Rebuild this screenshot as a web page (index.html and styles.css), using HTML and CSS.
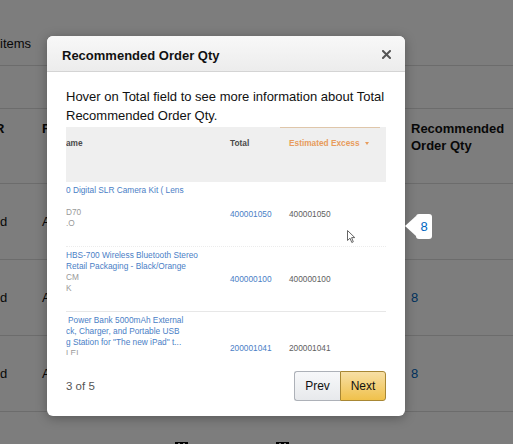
FILE: index.html
```html
<!DOCTYPE html>
<html lang="en">
<head>
<meta charset="utf-8">
<title>Recommended Order Qty</title>
<link rel="stylesheet" href="styles.css">
</head>
<body>
<div class="page">
  <div class="topbar"><span>items</span></div>
  <div class="band"></div>
  <div class="grid head">
    <div class="c1 cut">R</div>
    <div class="c2">Fulfillment</div>
    <div class="c3">Recommended<br>Order Qty</div>
  </div>
  <div class="grid row"><div class="c1">d</div><div class="c2">Amazon</div><div class="c3"></div></div>
  <div class="grid row"><div class="c1">d</div><div class="c2">Amazon</div><div class="c3 qty">8</div></div>
  <div class="grid row"><div class="c1">d</div><div class="c2">Amazon</div><div class="c3 qty">8</div></div>
  <div class="marks"><span class="mark"></span><span class="mark"></span></div>
</div>

<div class="overlay"></div>

<div class="modal">
  <div class="mhead">
    <span class="mtitle">Recommended Order Qty</span>
    <svg class="close" viewBox="0 0 9 9" width="9" height="9"><path d="M1 1L8 8M8 1L1 8" stroke="#555" stroke-width="2" stroke-linecap="square"/></svg>
  </div>
  <div class="mbody">
    <p class="intro">Hover on Total field to see more information about Total Recommended Order Qty.</p>
    <div class="shot">
      <div class="shead">
        <div class="sh">ame</div>
        <div class="sh">Total</div>
        <div class="sh excess-h">Estimated Excess<span class="caret"></span></div>
      </div>
      <div class="srow dotted">
        <div class="sname">
          <span class="link">0 Digital SLR Camera Kit ( Lens</span>
          <span class="gap"></span>
          <span class="meta">D70</span>
          <span class="meta">.O</span>
        </div>
        <div class="stotal">400001050</div>
        <div class="sexcess">400001050</div>
      </div>
      <div class="srow solid">
        <div class="sname">
          <span class="link">HBS-700 Wireless Bluetooth Stereo</span>
          <span class="link">Retail Packaging - Black/Orange</span>
          <span class="meta">CM</span>
          <span class="meta">K</span>
        </div>
        <div class="stotal">400000100</div>
        <div class="sexcess">400000100</div>
      </div>
      <div class="srow">
        <div class="sname tall">
          <span class="link ind">Power Bank 5000mAh External</span>
          <span class="link">ck, Charger, and Portable USB</span>
          <span class="link">g Station for "The new iPad" t...</span>
          <span class="meta">LEL</span>
        </div>
        <div class="stotal">200001041</div>
        <div class="sexcess">200001041</div>
      </div>
    </div>
    <div class="mfoot">
      <span class="count">3 of 5</span>
      <div class="btns">
        <button class="btn prev" type="button">Prev</button>
        <button class="btn next" type="button">Next</button>
      </div>
    </div>
  </div>
</div>

<div class="pop">8</div>

<svg class="cursor" viewBox="0 0 9 14" width="9" height="14"><path d="M0.5 0.5L0.5 10.5L3 8.2L4.8 12.5L6.3 11.8L4.6 7.6L7.8 7.6Z" fill="#fff" stroke="#666" stroke-width="1" stroke-linejoin="round"/></svg>
</body>
</html>
```

FILE: styles.css
```css
* { box-sizing: border-box; }
html, body { margin: 0; padding: 0; }
body {
  width: 513px;
  height: 444px;
  overflow: hidden;
  position: relative;
  background: #fff;
  color: #111;
  font-family: "Liberation Sans", Arial, sans-serif;
  font-size: 13px;
}

/* underlying page */
.page { width: 513px; }
.topbar {
  height: 66px;
  padding-top: 34px;
  line-height: 19px;
  border-bottom: 1px solid #dcdcdc;
}
.band { height: 43px; border-bottom: 1px solid #dcdcdc; }
.grid {
  display: grid;
  grid-template-columns: 42px 369px 1fr;
  border-bottom: 1px solid #dcdcdc;
  white-space: nowrap;
}
.head {
  height: 75px;
  padding-top: 11px;
  font-weight: bold;
  line-height: 17px;
}
.head .cut { margin-left: -5px; }
.row { height: 76px; align-items: center; line-height: 19px; }
.qty { color: #0066c0; }
.marks { display: flex; gap: 88px; padding: 30px 0 0 175px; }
.mark {
  width: 13px;
  height: 6px;
  border-top: 1px solid #000;
  background: repeating-linear-gradient(90deg, #000 0 3px, transparent 3px 5px);
}

.overlay {
  position: absolute;
  inset: 0;
  background: rgba(0, 0, 0, 0.51);
}

/* modal */
.modal {
  position: absolute;
  left: 47px;
  top: 36px;
  width: 358px;
  background: #fff;
  border-radius: 6px;
  overflow: hidden;
  box-shadow: 0 2px 12px rgba(0, 0, 0, 0.3);
}
.mhead {
  height: 36px;
  padding: 3px 14px 0 15px;
  display: flex;
  align-items: center;
  justify-content: space-between;
  background: linear-gradient(#f8f8f8, #ececec);
  border-bottom: 1px solid #d4d4d4;
}
.mtitle { font-weight: bold; font-size: 13px; color: #111; }
.close { display: block; margin-top: -2px; }
.mbody { padding: 15px 19px 15px; }
.intro { margin: 0 -6px 0 0; line-height: 19px; color: #111; }

.shot {
  margin-top: 2px;
  height: 228px;
  overflow: hidden;
  font-size: 8.3px;
  line-height: 11px;
  color: #666;
  white-space: nowrap;
}
.shead {
  height: 55px;
  background: #efefef;
  display: grid;
  grid-template-columns: 164px 50px 1fr;
}
.sh { padding-top: 11px; font-weight: bold; color: #4a4a4a; }
.excess-h {
  padding-top: 10px;
  padding-left: 9px;
  margin-right: 6px;
  border-top: 1px solid #dfc6aa;
  color: #e89c5c;
  display: flex;
  align-items: flex-start;
}
.caret {
  width: 0;
  height: 0;
  margin: 4px 0 0 5px;
  border-top: 3px solid #e89c5c;
  border-left: 2.5px solid transparent;
  border-right: 2.5px solid transparent;
}
.srow {
  display: grid;
  grid-template-columns: 164px 50px 1fr;
  min-height: 65px;
  align-items: center;
}
.srow.dotted { border-bottom: 1px dotted #ececec; }
.srow.solid { border-bottom: 1px solid #e7e7e7; }
.sname {
  align-self: start;
  padding: 4px 0;
  display: flex;
  flex-direction: column;
  gap: 2px;
  line-height: 9px;
}
.sname.tall { padding-bottom: 26px; }
.gap { height: 9px; }
.link { color: #4a80c6; }
.ind { padding-left: 2px; }
.meta { color: #9a9a9a; }
.stotal { color: #4a80c6; }
.sexcess { padding-left: 9px; color: #5e5e5e; }

.mfoot {
  margin-top: 16px;
  display: flex;
  align-items: center;
  justify-content: space-between;
}
.count { font-size: 11.5px; color: #555; }
.btns { display: flex; }
.btn {
  width: 46px;
  height: 30px;
  padding: 0;
  font-family: inherit;
  font-size: 12px;
  color: #111;
  cursor: pointer;
}
.prev {
  border: 1px solid #adb1b8;
  border-right: none;
  border-radius: 3px 0 0 3px;
  background: linear-gradient(#f7f8fa, #e7e9ec);
}
.next {
  border: 1px solid #a88734;
  border-radius: 0 3px 3px 0;
  background: linear-gradient(#f7dfa5, #f0c14b);
}

/* tooltip bubble */
.pop {
  position: absolute;
  left: 416px;
  top: 214px;
  width: 16px;
  height: 25px;
  background: #fff;
  border-radius: 3px;
  color: #0066c0;
  line-height: 25px;
  text-align: center;
}
.pop::before {
  content: "";
  position: absolute;
  left: -11px;
  top: 2px;
  border-right: 11px solid #fff;
  border-top: 10px solid transparent;
  border-bottom: 10px solid transparent;
}

.cursor { position: absolute; left: 347px; top: 230px; }
```
